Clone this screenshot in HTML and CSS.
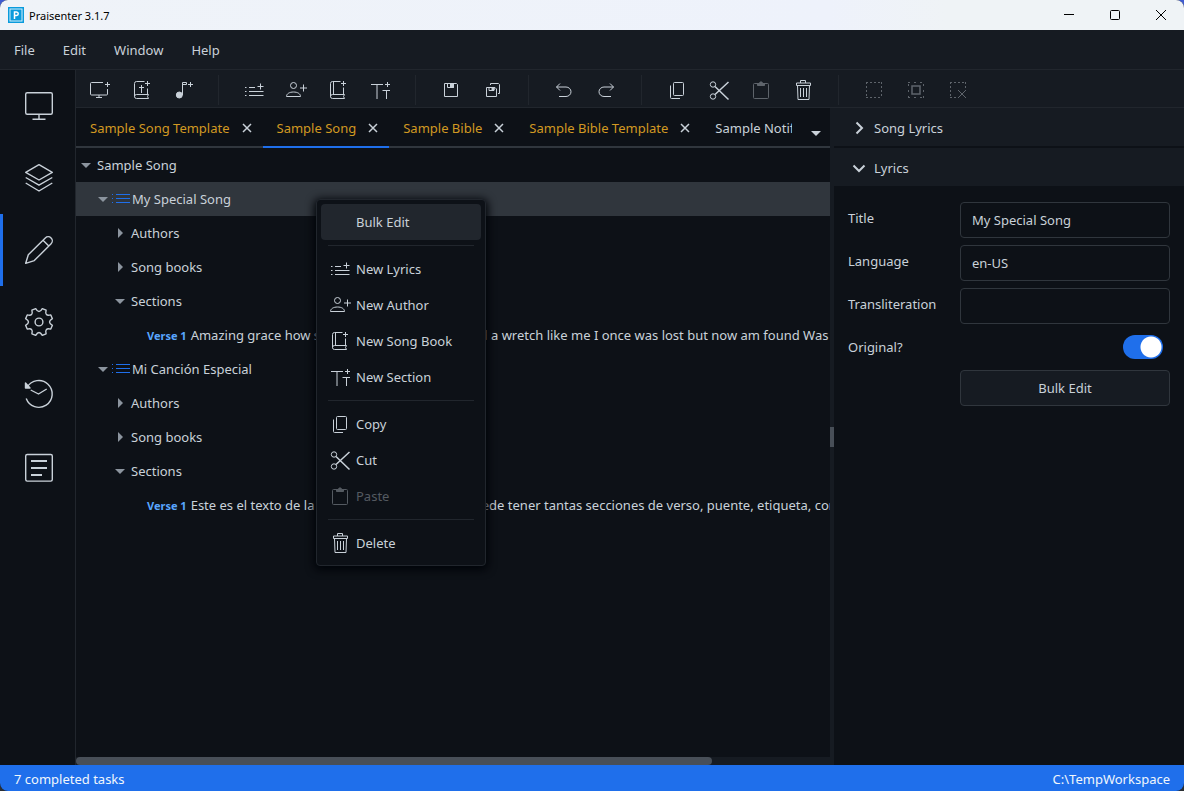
FILE: index.html
```html
<!DOCTYPE html>
<html lang="en">
<head>
    <meta charset="UTF-8">
    <meta name="viewport" content="width=device-width, initial-scale=1.0">
    <title>Praisenter 3.1.7</title>
    <link rel="stylesheet" href="styles.css">
</head>
<body>
    <!-- Icons -->
    <svg class="sprite" aria-hidden="true">
        <symbol id="i-slide" viewBox="0 0 24 24"><path d="M16 4.5H4.5a1 1 0 0 0-1 1V16a1 1 0 0 0 1 1h15a1 1 0 0 0 1-1v-5M12 17v2.5M9 19.5h6M20.5 4v5M18 6.5h5"/></symbol>
        <symbol id="i-bible" viewBox="0 0 24 24"><path d="M15.5 3.5H7.5a2 2 0 0 0-2 2v13a2 2 0 0 0 2 2h12l-1-2 1-2h-12a2 2 0 0 0-2 2M18.5 16.5V10.5M12.5 7v8M10 9.5h5M18.5 3v5M16 5.5h5"/></symbol>
        <symbol id="i-song" viewBox="0 0 24 24"><circle class="solid" cx="8.3" cy="17" r="3"/><path d="M11.5 17V4.5h4v2h-4M19.5 4v5M17 6.5h5"/></symbol>
        <symbol id="i-lyrics" viewBox="0 0 24 24"><path d="M3 9.5h1.5M3 13.5h1.5M3 17.5h1.5M7 9.5h6M7 13.5h14.5M7 17.5h14.5M18.5 5.5v6M15.5 8.5h6"/></symbol>
        <symbol id="i-author" viewBox="0 0 24 24"><circle cx="9.5" cy="7.5" r="3"/><path d="M2.5 18.5c0-2.8 3-4.5 7-4.5s7 1.7 7 4.5zM19.5 6.5v7M16 10h7"/></symbol>
        <symbol id="i-book" viewBox="0 0 24 24"><path d="M14.5 3.5h-8a2 2 0 0 0-2 2v13a2 2 0 0 0 2 2h12l-1-2 1-2h-12a2 2 0 0 0-2 2M17.5 16.5V9.5M7.5 3.5v13M17.5 3v5M15 5.5h5"/></symbol>
        <symbol id="i-section" viewBox="0 0 24 24"><path d="M3 6.5h12M9 6.5V21M14.5 12.5h7.5M18.5 12.5V21M19.5 4v5M17 6.5h5"/></symbol>
        <symbol id="i-save" viewBox="0 0 24 24"><path d="M5.5 5.5h12l1 1v12h-13zM8.5 5.5v4h6v-4"/><path class="solid" d="M11.5 6h3v3.5h-3z"/></symbol>
        <symbol id="i-saveall" viewBox="0 0 24 24"><path d="M5.5 9.5h8.500l1.500 1.500v7.500h-10zM8 9.500v3h5v-3M9.500 7V5.500h8l1 1v9h-1.500"/><path class="solid" d="M11 9.500h2v2.500h-2z"/></symbol>
        <symbol id="i-undo" viewBox="0 0 24 24"><path d="M8 5.500 4.500 9 8 12.500M4.500 9H14a5 4.750 0 0 1 0 9.500H7"/></symbol>
        <symbol id="i-redo" viewBox="0 0 24 24"><path d="M16 5.500 19.500 9 16 12.500M19.500 9H10a5 4.750 0 0 0 0 9.500h7"/></symbol>
        <symbol id="i-copy" viewBox="0 0 24 24"><rect x="8.5" y="4.5" width="10" height="13" rx="1"/><path d="M5.5 7.5v12a1 1 0 0 0 1 1H15"/></symbol>
        <symbol id="i-cut" viewBox="0 0 24 24"><circle cx="6" cy="6.5" r="2.7"/><circle cx="6" cy="18.5" r="2.7"/><path class="thick" d="m8 8.5 13.500 13M8 16.500 21.500 4"/></symbol>
        <symbol id="i-paste" viewBox="0 0 24 24"><rect x="4.5" y="5.5" width="15" height="15" rx="1"/><path class="solid" d="M8.5 5.5h2l.5-1.500h2l.5 1.500h2v2h-7z"/></symbol>
        <symbol id="i-delete" viewBox="0 0 24 24"><path d="M9.5 5V2.5h5V5M5.500 5h14v2.500h-14zM6.500 7.500l.5 14h11l.5-14M9.500 10v9M12.500 10v9M15.500 10v9"/></symbol>
        <symbol id="i-all" viewBox="0 0 24 24"><path stroke-dasharray="2 2" d="M4 4.5h16M4 19.5h16M4.5 4v16M19.5 4v16"/></symbol>
        <symbol id="i-none" viewBox="0 0 24 24"><path stroke-dasharray="2 4" d="M4 4.5h16M4 19.5h16M4.5 6v14M19.5 6v14"/><rect class="thick" x="8" y="8" width="8" height="8"/></symbol>
        <symbol id="i-invert" viewBox="0 0 24 24"><path stroke-dasharray="2 2" d="M4 4.5h16M4 19.5h7M4.5 4v16M19.5 4v7"/><path d="m12 12 8 8M20 12l-8 8"/></symbol>
        <symbol id="i-close" viewBox="0 0 10 10"><path d="m1 1 8 8M9 1 1 9"/></symbol>
        <symbol id="i-list" viewBox="0 0 18 12"><path d="M0 1.5h1M0 5.5h1M0 9.5h1M4 1.5h14M4 5.5h14M4 9.5h14"/></symbol>
    </svg>

    <div class="window">
        <!-- Title bar -->
        <header class="titlebar">
            <svg class="logo" viewBox="0 0 16 16" aria-hidden="true">
                <rect width="16" height="16" fill="#0a9bdc"/>
                <rect x="2" y="2" width="12" height="12" fill="none" stroke="#d5effb"/>
                <path d="M6.500 12V5h2a1.700 1.700 0 0 1 0 3.500h-2" fill="none" stroke="#fff" stroke-width="1.500"/>
            </svg>
            <span class="app-name">Praisenter 3.1.7</span>
            <button class="win-btn" aria-label="Minimize"><svg viewBox="0 0 12 12"><path d="M1 5.5h10"/></svg></button>
            <button class="win-btn" aria-label="Maximize"><svg viewBox="0 0 12 12"><rect x="1.5" y="1.5" width="9" height="9" rx="1"/></svg></button>
            <button class="win-btn" aria-label="Close"><svg viewBox="0 0 12 12"><path d="m1 1 10 10M11 1 1 11"/></svg></button>
        </header>

        <nav class="menubar">
            <button>File</button>
            <button>Edit</button>
            <button>Window</button>
            <button>Help</button>
        </nav>

        <div class="main">
            <!-- Side navigation -->
            <nav class="sidebar">
                <button aria-label="Present"><svg viewBox="0 0 32 32"><rect x="2.7" y="2.7" width="26.6" height="21.6" rx="1.5"/><path d="M16 24.500V29M9.500 29.300h13"/></svg></button>
                <button aria-label="Library"><svg viewBox="0 0 32 32"><path d="m16 2.700 13.300 7.600L16 18 2.700 10.300zM2.700 15.500 16 23.200l13.300-7.700M2.700 21 16 29l13.300-8"/></svg></button>
                <button class="active" aria-label="Editor"><svg viewBox="0 0 32 32"><path d="m2.700 29.300 2.600-8.600L22.300 3.900a4.100 4.100 0 0 1 5.800 5.800L11.300 26.600zM20 6.300l5.800 5.700"/></svg></button>
                <button aria-label="Settings"><svg viewBox="0 0 32 32"><path d="M12.700 2.600Q16 8.400 19.300 2.600L23.100 4.200Q21.400 10.600 27.800 8.900L29.400 12.700Q23.600 16 29.400 19.300L27.800 23.100Q21.400 21.400 23.100 27.800L19.300 29.400Q16 23.600 12.700 29.400L8.900 27.800Q10.600 21.400 4.200 23.100L2.600 19.300Q8.400 16 2.600 12.700L4.200 8.900Q10.600 10.600 8.900 4.200Z"/><circle cx="16" cy="16" r="3.9"/></svg></button>
                <button aria-label="History"><svg viewBox="0 0 32 32"><path d="M3.200 20.500A13.400 13.400 0 1 0 4.200 9.200M7.700 12l7.800 4 8.200-5"/><path class="solid" d="M2.500 5v5H7z"/></svg></button>
                <button aria-label="Tasks"><svg viewBox="0 0 32 32"><rect x="2.7" y="4.500" width="26.6" height="26.6" rx="1.5"/><path class="bold" d="M8 11h16M8 18h16M8 25h11"/></svg></button>
            </nav>

            <div class="work">
                <!-- Toolbar -->
                <div class="toolbar">
                    <button aria-label="New slide"><svg><use href="#i-slide"/></svg></button>
                    <button aria-label="New bible"><svg><use href="#i-bible"/></svg></button>
                    <button aria-label="New song"><svg><use href="#i-song"/></svg></button>
                    <span class="sep"></span>
                    <button aria-label="New lyrics"><svg><use href="#i-lyrics"/></svg></button>
                    <button aria-label="New author"><svg><use href="#i-author"/></svg></button>
                    <button aria-label="New song book"><svg><use href="#i-book"/></svg></button>
                    <button aria-label="New section"><svg><use href="#i-section"/></svg></button>
                    <span class="sep"></span>
                    <button aria-label="Save"><svg><use href="#i-save"/></svg></button>
                    <button aria-label="Save all"><svg><use href="#i-saveall"/></svg></button>
                    <span class="sep"></span>
                    <button aria-label="Undo"><svg><use href="#i-undo"/></svg></button>
                    <button aria-label="Redo"><svg><use href="#i-redo"/></svg></button>
                    <span class="sep"></span>
                    <button aria-label="Copy"><svg><use href="#i-copy"/></svg></button>
                    <button aria-label="Cut"><svg><use href="#i-cut"/></svg></button>
                    <button aria-label="Paste" disabled><svg><use href="#i-paste"/></svg></button>
                    <button aria-label="Delete"><svg><use href="#i-delete"/></svg></button>
                    <span class="sep"></span>
                    <button aria-label="Select all" disabled><svg><use href="#i-all"/></svg></button>
                    <button aria-label="Select none" disabled><svg><use href="#i-none"/></svg></button>
                    <button aria-label="Invert selection" disabled><svg><use href="#i-invert"/></svg></button>
                </div>

                <div class="panes">
                    <section class="editor">
                        <!-- Document tabs -->
                        <div class="tabs">
                            <div class="tab-list">
                                <div class="tab changed"><button class="tab-name">Sample Song Template</button><button class="tab-close" aria-label="Close"><svg><use href="#i-close"/></svg></button></div>
                                <div class="tab changed current"><button class="tab-name">Sample Song</button><button class="tab-close" aria-label="Close"><svg><use href="#i-close"/></svg></button></div>
                                <div class="tab changed"><button class="tab-name">Sample Bible</button><button class="tab-close" aria-label="Close"><svg><use href="#i-close"/></svg></button></div>
                                <div class="tab changed"><button class="tab-name">Sample Bible Template</button><button class="tab-close" aria-label="Close"><svg><use href="#i-close"/></svg></button></div>
                                <div class="tab"><button class="tab-name">Sample Notification</button></div>
                            </div>
                            <button class="tab-more" aria-label="More tabs"><span class="arrow down"></span></button>
                        </div>

                        <!-- Song tree -->
                        <ul class="tree">
                            <li class="level-0"><span class="arrow down"></span>Sample Song</li>
                            <li class="level-1 selected"><span class="arrow down"></span><svg><use href="#i-list"/></svg>My Special Song</li>
                            <li class="level-2"><span class="arrow right"></span>Authors</li>
                            <li class="level-2"><span class="arrow right"></span>Song books</li>
                            <li class="level-2"><span class="arrow down"></span>Sections</li>
                            <li class="level-3"><b>Verse 1</b>Amazing grace how sweet the sound, That saved a wretch like me I once was lost but now am found Was blind but now I see</li>
                            <li class="level-1"><span class="arrow down"></span><svg><use href="#i-list"/></svg>Mi Canción Especial</li>
                            <li class="level-2"><span class="arrow right"></span>Authors</li>
                            <li class="level-2"><span class="arrow right"></span>Song books</li>
                            <li class="level-2"><span class="arrow down"></span>Sections</li>
                            <li class="level-3"><b>Verse 1</b>Este es el texto de la canción, la cual además puede tener tantas secciones de verso, puente, etiqueta, coro</li>
                        </ul>
                        <div class="scrollbar"><div class="thumb"></div></div>
                    </section>

                    <div class="splitter"><span></span></div>

                    <!-- Properties -->
                    <aside class="props">
                        <button class="pane-title"><svg viewBox="0 0 14 14"><path d="m4.500 1.500 5.500 5.500-5.500 5.500"/></svg>Song Lyrics</button>
                        <button class="pane-title"><svg viewBox="0 0 14 14"><path d="M1.500 4.500 7 10l5.500-5.500"/></svg>Lyrics</button>
                        <form class="props-form">
                            <label for="title">Title</label>
                            <input type="text" id="title" value="My Special Song">
                            <label for="language">Language</label>
                            <input type="text" id="language" value="en-US">
                            <label for="translit">Transliteration</label>
                            <input type="text" id="translit">
                            <label for="original">Original?</label>
                            <input type="checkbox" id="original" class="toggle" checked>
                            <button type="button" class="bulk">Bulk Edit</button>
                        </form>
                    </aside>
                </div>
            </div>
        </div>

        <footer class="status">
            <span>7 completed tasks</span>
            <span>C:\TempWorkspace</span>
        </footer>

        <!-- Context menu -->
        <div class="context-menu">
            <button class="hover"><svg></svg>Bulk Edit</button>
            <hr>
            <button><svg><use href="#i-lyrics"/></svg>New Lyrics</button>
            <button><svg><use href="#i-author"/></svg>New Author</button>
            <button><svg><use href="#i-book"/></svg>New Song Book</button>
            <button><svg><use href="#i-section"/></svg>New Section</button>
            <hr>
            <button><svg><use href="#i-copy"/></svg>Copy</button>
            <button><svg><use href="#i-cut"/></svg>Cut</button>
            <button disabled><svg><use href="#i-paste"/></svg>Paste</button>
            <hr>
            <button><svg><use href="#i-delete"/></svg>Delete</button>
        </div>
    </div>
</body>
</html>
```

FILE: styles.css
```css
/* General */
* {
    margin: 0;
    padding: 0;
    box-sizing: border-box;
}

html {
    background: linear-gradient(#3f5bd0 50%, #2b2f33 50%);
}

body, button, input {
    font-family: "Noto Sans", "Open Sans", sans-serif;
    font-size: 13px;
    color: #c9d1d9;
}

button {
    background: none;
    border: none;
    cursor: pointer;
}

svg {
    display: block;
    flex: none;
    fill: none;
    stroke: currentColor;
    stroke-width: 1;
}

.sprite {
    display: none;
}

.solid {
    fill: currentColor;
}

.thick {
    stroke-width: 1.5;
}

.window {
    position: relative;
    display: flex;
    flex-direction: column;
    height: 100vh;
    background-color: #0d1117;
    border-radius: 8px;
    overflow: hidden;
}

/* Title bar */
.titlebar {
    display: flex;
    align-items: center;
    height: 30px;
    padding-left: 8px;
    background: linear-gradient(90deg, #eff3f8, #eef2fb 70%, #eff3f6 80%);
}

.logo {
    width: 16px;
    height: 16px;
    margin-right: 5px;
    stroke: none;
}

.app-name {
    flex: 1;
    font-size: 11px;
    color: #000;
}

.win-btn {
    display: flex;
    align-items: center;
    justify-content: center;
    width: 46px;
    height: 28px;
    color: #000;
}

.win-btn svg {
    width: 12px;
    height: 12px;
}

/* Menu bar */
.menubar {
    display: flex;
    height: 40px;
    background-color: #161b22;
    border-bottom: 1px solid #21262d;
}

.menubar button {
    padding: 0 14px;
}

.main {
    display: flex;
    flex: 1;
    min-height: 0;
}

/* Side navigation */
.sidebar {
    display: flex;
    flex-direction: column;
    width: 76px;
    border-right: 1px solid #21262d;
}

.sidebar button {
    display: flex;
    align-items: center;
    justify-content: center;
    height: 72px;
    border-left: 3px solid transparent;
}

.sidebar .active {
    border-left-color: #1f6feb;
}

.sidebar svg {
    width: 32px;
    height: 32px;
    stroke-width: 1.4;
    stroke-linejoin: round;
}

.sidebar .bold {
    stroke-width: 2;
}

.work {
    display: flex;
    flex-direction: column;
    flex: 1;
    min-width: 0;
}

/* Toolbar */
.toolbar {
    display: flex;
    align-items: center;
    height: 38px;
    padding: 2px 2px 0;
    background-color: #161b22;
    border-bottom: 1px solid #21262d;
}

.toolbar button {
    display: flex;
    justify-content: center;
    width: 42px;
}

.toolbar svg, .context-menu svg {
    width: 24px;
    height: 24px;
}

.toolbar button:disabled {
    opacity: 0.4;
}

.toolbar .sep {
    width: 1px;
    height: 30px;
    margin: 0 14px;
    background-color: #21262d;
}

.panes {
    display: flex;
    flex: 1;
    min-height: 0;
}

.editor {
    display: flex;
    flex-direction: column;
    flex: 1;
    min-width: 0;
}

/* Tabs */
.tabs {
    display: flex;
    height: 40px;
    box-shadow: inset 0 -2px #30363d;
}

.tab-list {
    display: flex;
    flex: 1;
    min-width: 0;
    overflow: hidden;
}

.tab {
    display: flex;
    align-items: center;
    flex: none;
    gap: 12px;
    padding: 2px 11px 0 14px;
    border-bottom: 2px solid transparent;
}

.tab.current {
    border-bottom-color: #1f6feb;
}

.tab-name {
    white-space: nowrap;
}

.changed .tab-name {
    color: #d29922;
}

.tab-close svg {
    width: 10px;
    height: 10px;
    stroke-width: 1.5;
}

.tab-more {
    width: 38px;
    padding: 10px 9px 0 19px;
}

.arrow {
    display: block;
    flex: none;
    width: 10px;
    height: 10px;
    background-color: #8b949e;
}

.arrow.down {
    clip-path: polygon(0 3px, 100% 3px, 50% 8px);
}

.arrow.right {
    clip-path: polygon(3px 0, 8px 50%, 3px 100%);
}

.tab-more .arrow {
    background-color: #c9d1d9;
}

/* Tree */
.tree {
    flex: 1;
    list-style: none;
    overflow: hidden;
}

.tree li {
    display: flex;
    align-items: center;
    height: 34px;
    white-space: nowrap;
}

.tree .arrow {
    margin-right: 6px;
}

.tree svg {
    width: 18px;
    height: 12px;
    margin: 0 2px 0 -2px;
    color: #1f6feb;
}

.tree b {
    margin-right: 4px;
    font-size: 11px;
    color: #58a6ff;
}

.level-0 {
    padding-left: 5px;
}

.level-1 {
    padding-left: 22px;
}

.level-2 {
    padding-left: 39px;
}

.level-3 {
    padding-left: 71px;
}

.selected {
    background-color: #30363d;
}

.scrollbar {
    height: 8px;
    background-color: #161b22;
}

.thumb {
    width: 84.3%;
    height: 8px;
    border-radius: 4px;
    background-color: #484f58;
}

.splitter {
    display: flex;
    align-items: center;
    width: 4px;
    background-color: #161b22;
}

.splitter span {
    width: 4px;
    height: 20px;
    background-color: #484f58;
}

/* Properties */
.props {
    display: flex;
    flex-direction: column;
    gap: 2px;
    width: 350px;
}

.pane-title {
    display: flex;
    align-items: center;
    gap: 8px;
    height: 38px;
    padding: 2px 18px 0;
    background-color: #161b22;
}

.pane-title svg {
    width: 14px;
    height: 14px;
    stroke-width: 2;
}

.props-form {
    display: grid;
    grid-template-columns: 112px 1fr;
    row-gap: 7px;
    padding: 14px;
}

.props-form label {
    height: 32px;
    line-height: 32px;
}

.props-form input[type="text"], .bulk {
    width: 100%;
    height: 36px;
    padding: 0 11px;
    background-color: #0d1117;
    border: 1px solid #30363d;
    border-radius: 4px;
}

.props-form .bulk {
    grid-column: 2;
    background-color: #161b22;
}

.toggle {
    appearance: none;
    align-self: center;
    justify-self: end;
    width: 40px;
    height: 24px;
    margin-right: 7px;
    border-radius: 12px;
    background: #30363d radial-gradient(circle at 12px 12px, #fff 10px, transparent 11px);
}

.toggle:checked {
    background: #1f6feb radial-gradient(circle at 28px 12px, #fff 10px, transparent 11px);
}

/* Status bar */
.status {
    display: flex;
    align-items: center;
    justify-content: space-between;
    height: 26px;
    padding: 2px 14px 0;
    background-color: #1f6feb;
    color: #f0f6fc;
}

/* Context menu */
.context-menu {
    position: absolute;
    top: 199px;
    left: 316px;
    width: 170px;
    padding: 4px;
    background-color: #0d1117;
    border: 1px solid #21262d;
    border-radius: 4px;
    box-shadow: 0 2px 8px 2px #010409;
}

.context-menu button {
    display: flex;
    align-items: center;
    gap: 4px;
    width: 100%;
    height: 36px;
    padding-left: 7px;
    border-radius: 4px;
}

.context-menu .hover {
    background-color: #21262d;
}

.context-menu button:disabled {
    color: #545a61;
}

.context-menu hr {
    height: 1px;
    margin: 5px 7px;
    border: none;
    background-color: #21262d;
}
```
